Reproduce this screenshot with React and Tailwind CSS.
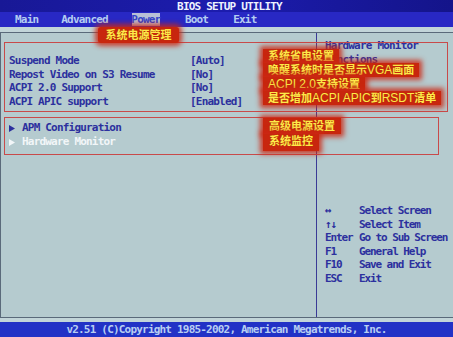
import React from 'react';

const mono = "font-['DejaVu_Sans_Mono','Liberation_Mono',monospace] font-bold text-[11px] tracking-[-0.8px]";
const cjk = "font-['Liberation_Sans','Noto_Sans_CJK_SC',sans-serif] font-bold text-[11px] tracking-normal text-[#ffe84a] [text-shadow:0_0_1px_#a04000]";
const glow = "bg-[#c8260e] shadow-[0_0_5px_3px_rgba(205,40,20,0.85)]";

const settings = [
  ['Suspend Mode', '[Auto]'],
  ['Repost Video on S3 Resume', '[No]'],
  ['ACPI 2.0 Support', '[No]'],
  ['ACPI APIC support', '[Enabled]'],
];

const help = [
  ['\u2194', 'Select Screen'],
  ['\u2191\u2193', 'Select Item'],
  ['Enter', 'Go to Sub Screen'],
  ['F1', 'General Help'],
  ['F10', 'Save and Exit'],
  ['ESC', 'Exit'],
];

function Tri({ color }) {
  return (
    <svg width="6" height="7" viewBox="0 0 6 7" className="mr-[7px]">
      <path d="M0 0 L6 3.5 L0 7 Z" fill={color} />
    </svg>
  );
}

function Lat({ children }) {
  return <span className="font-normal text-[12px]">{children}</span>;
}

export default function App() {
  return (
    <div className={`relative w-[453px] h-[337px] overflow-hidden flex flex-col whitespace-nowrap bg-[#b5cbcf] ${mono}`}>
      {/* title */}
      <div className="h-[12px] bg-gradient-to-r from-[#181896] via-[#1c1cae] to-[#14148a] flex justify-center items-center text-[#eef2ff] leading-none pt-[1px] pl-[6px]">
        BIOS SETUP UTILITY
      </div>
      {/* menu */}
      <div className="h-[15px] bg-[#2828c4] flex items-center text-[#b4cdf2] leading-none">
        <span className="ml-[15px]">Main</span>
        <span className="ml-[23px]">Advanced</span>
        <span className="ml-[24px] h-[13px] w-[28px] bg-[#b8c0d6] text-[#3444c8] flex items-center justify-center">Power</span>
        <span className="ml-[25px]">Boot</span>
        <span className="ml-[25px]">Exit</span>
      </div>
      {/* body */}
      <div className="flex-1 flex flex-col bg-[#c2d5d9] pt-[5px] pb-[4px]">
        <div className="flex-1 grid grid-cols-[316px_1fr] bg-[#b5cbcf] border-t border-b border-l border-[#5a6a7a]">
          <div className="border-r border-[#3a3a96] pt-[21px] pl-[8px] text-[#2c309e] leading-[13.5px]">
            {settings.map(([k, v]) => (
              <div key={k} className="grid grid-cols-[181px_1fr]">
                <span>{k}</span>
                <span>{v}</span>
              </div>
            ))}
            <div className="mt-[13px] leading-[14px]">
              <div className="flex items-center">
                <Tri color="#2c309e" />
                <span>APM Configuration</span>
              </div>
              <div className="flex items-center text-[#f2f6f8]">
                <Tri color="#f2f6f8" />
                <span>Hardware Monitor</span>
              </div>
            </div>
          </div>
          <div className="flex flex-col pl-[8px] pt-[6px] pb-[32px] text-[#2c309e] leading-[13.5px]">
            <div>Hardware Monitor</div>
            <div>Functions</div>
            <div className="mt-auto tracking-[-1.1px]">
              {help.map(([k, v]) => (
                <div key={k} className="grid grid-cols-[34px_1fr]">
                  <span>{k}</span>
                  <span>{v}</span>
                </div>
              ))}
            </div>
          </div>
        </div>
      </div>
      {/* footer */}
      <div className="h-[15px] bg-[#2232c6] flex justify-center items-center text-[#b8cef2] leading-none">
        v2.51 (C)Copyright 1985-2002, American Megatrends, Inc.
      </div>

      {/* annotations */}
      <div className="absolute left-[4px] top-[42px] w-[444px] h-[70px] border border-[#c84a4a]" />
      <div className="absolute left-[4px] top-[117px] w-[435px] h-[38px] border border-[#c84a4a]" />

      <div className={`absolute left-[98px] top-[27px] w-[81px] h-[16px] rounded-[3px] flex items-center justify-center ${glow} ${cjk}`}>
        系统电源管理
      </div>

      <div className={`absolute left-[263px] top-[49px] flex flex-col items-start leading-[14px] ${cjk}`}>
        <span className={`px-[5px] ${glow}`}>系统省电设置</span>
        <span className={`px-[5px] ${glow}`}>唤醒系统时是否显示<Lat>VGA</Lat>画面</span>
        <span className={`px-[5px] ${glow}`}><Lat>ACPI 2.0</Lat>支持设置</span>
        <span className={`px-[5px] ${glow}`}>是否增加<Lat>ACPI APIC</Lat>到<Lat>RSDT</Lat>清单</span>
      </div>

      <div className={`absolute left-[263px] top-[118px] flex flex-col items-start leading-[14px] ${cjk}`}>
        <span className={`px-[6px] py-[1px] ${glow}`}>高级电源设置</span>
        <span className={`px-[6px] pb-[3px] ${glow}`}>系统监控</span>
      </div>
    </div>
  );
}
